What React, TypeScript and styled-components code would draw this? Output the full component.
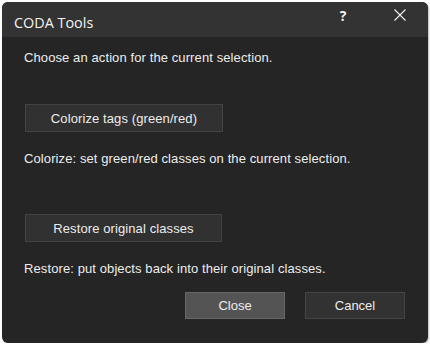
import React from "react";
import styled, { createGlobalStyle } from "styled-components";

const Global = createGlobalStyle`
  html, body { margin: 0; padding: 0; background: #ffffff; }
  body { font-family: "Liberation Sans", Arial, sans-serif; }
`;

const Page = styled.div`
  padding: 2px 2px 0 2px;
  width: 426px;
`;

const Window = styled.div`
  width: 426px;
  height: 341px;
  background: #252525;
  border-radius: 6px;
  overflow: hidden;
  display: flex;
  flex-direction: column;
  box-shadow: 1px 1px 2px rgba(0, 0, 0, 0.25);
`;

const TitleBar = styled.div`
  height: 35px;
  flex: none;
  background: #333333;
  display: flex;
  align-items: flex-start;
  padding-left: 12px;
`;

const Title = styled.div`
  flex: 1;
  padding-top: 11px;
  color: #f2f2f2;
  font-family: "Open Sans", "Noto Sans", sans-serif;
  font-size: 14.4px;
  line-height: 19px;
`;

const TitleButton = styled.div`
  width: 30px;
  height: 26px;
  display: flex;
  align-items: center;
  justify-content: center;
  color: #f2f2f2;
  font-family: "Open Sans", "Noto Sans", sans-serif;
  font-weight: 700;
  font-size: 14px;
`;

const Body = styled.div`
  flex: 1;
  display: flex;
  flex-direction: column;
  padding: 13px 23px 0 22px;
`;

const Line = styled.div<{ $top: number }>`
  margin-top: ${(p) => p.$top}px;
  height: 16px;
  line-height: 16px;
  color: #ededed;
  font-size: 13px;
  letter-spacing: 0.1px;
`;

const ActionButton = styled.div<{ $top: number; $width: number }>`
  margin-top: ${(p) => p.$top}px;
  margin-left: 1px;
  width: ${(p) => p.$width}px;
  height: 28px;
  box-sizing: border-box;
  background: #313131;
  border: 1px solid #434343;
  color: #ededed;
  font-size: 13px;
  letter-spacing: 0.1px;
  display: flex;
  align-items: center;
  justify-content: center;
`;

const Footer = styled.div`
  margin-top: 15px;
  display: flex;
  justify-content: flex-end;
  gap: 20px;
`;

const FooterButton = styled.div<{ $primary?: boolean }>`
  width: 100px;
  height: 27px;
  box-sizing: border-box;
  background: ${(p) => (p.$primary ? "#545454" : "#323232")};
  border: 1px solid ${(p) => (p.$primary ? "#666666" : "#444444")};
  color: #ededed;
  font-size: 13px;
  display: flex;
  align-items: center;
  justify-content: center;
`;

const CloseX = styled.svg`
  display: block;
`;

export default function App() {
  return (
    <>
      <Global />
      <Page>
        <Window>
          <TitleBar>
            <Title>CODA Tools</Title>
            <TitleButton>?</TitleButton>
            <TitleButton style={{ marginLeft: 27, marginRight: 13 }}>
              <CloseX width="12" height="12" viewBox="0 0 12 12">
                <path d="M0.5 0.5 L11.5 11.5 M11.5 0.5 L0.5 11.5" stroke="#f2f2f2" strokeWidth="1.1" />
              </CloseX>
            </TitleButton>
          </TitleBar>
          <Body>
            <Line $top={0}>Choose an action for the current selection.</Line>
            <ActionButton $top={38} $width={198}>Colorize tags (green/red)</ActionButton>
            <Line $top={19}>Colorize: set green/red classes on the current selection.</Line>
            <ActionButton $top={47} $width={197}>Restore original classes</ActionButton>
            <Line $top={19}>Restore: put objects back into their original classes.</Line>
            <Footer>
              <FooterButton $primary>Close</FooterButton>
              <FooterButton>Cancel</FooterButton>
            </Footer>
          </Body>
        </Window>
      </Page>
    </>
  );
}
